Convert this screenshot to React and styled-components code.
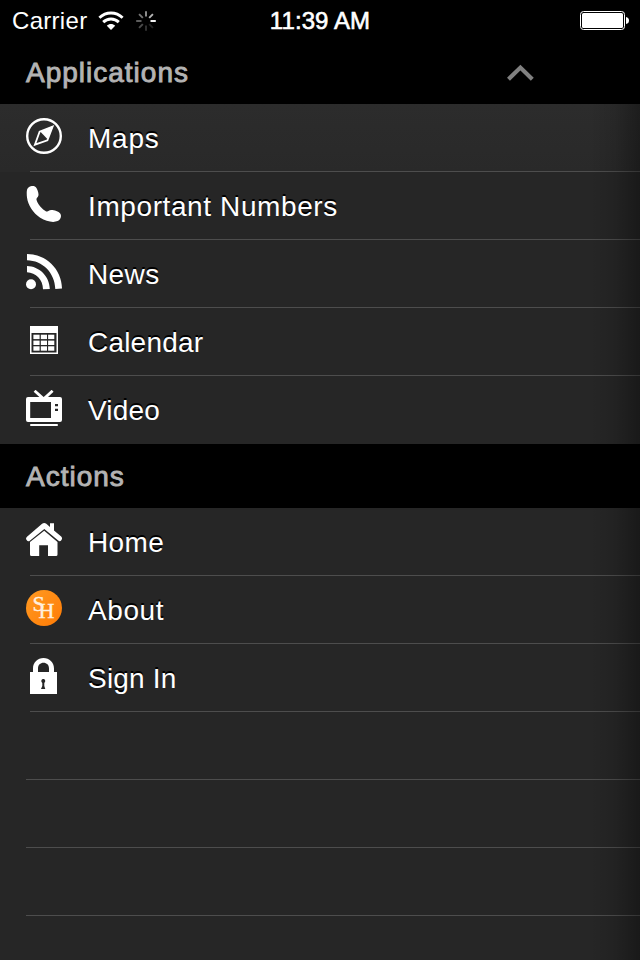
import styled, { createGlobalStyle } from 'styled-components';

const GlobalStyle = createGlobalStyle`
  body {
    margin: 0;
    background: #262626;
    font-family: 'Liberation Sans', Arial, sans-serif;
    overflow: hidden;
  }
`;

const Screen = styled.div`
  position: relative;
  width: 640px;
  height: 960px;
  overflow: hidden;
  background: #262626;
`;

const StatusBar = styled.header`
  display: grid;
  grid-template-columns: 1fr auto 1fr;
  align-items: center;
  height: 40px;
  padding: 0 11px;
  background: #000;
  color: #fff;
  font-size: 24px;
  line-height: 40px;
`;

const StatusLeft = styled.div`
  display: flex;
  align-items: center;
  svg {
    flex: none;
  }
`;

const Carrier = styled.span`
  box-sizing: border-box;
  width: 87px;
  padding: 1px 0 0 1px;
  letter-spacing: 0.3px;
`;

const Clock = styled.span`
  padding-top: 1px;
  letter-spacing: 0.1px;
  -webkit-text-stroke: 0.6px #fff;
`;

const StatusRight = styled.div`
  display: flex;
  justify-content: flex-end;
`;

const SectionHeader = styled.h2`
  display: flex;
  align-items: center;
  justify-content: space-between;
  box-sizing: border-box;
  height: 64px;
  margin: 0;
  padding: 2px 106px 0 26px;
  background: #000;
  color: #b3b3b3;
  font-size: 28px;
  font-weight: 400;
  letter-spacing: 1px;
  -webkit-text-stroke: 0.9px #b3b3b3;
`;

const List = styled.ul`
  margin: 0;
  padding: 0;
  list-style: none;
`;

const Row = styled.li`
  display: flex;
  align-items: center;
  box-sizing: border-box;
  height: 68px;
  padding: 0 0 4px 26px;
  background:
    linear-gradient(#4d4d4d, #4d4d4d) ${({ $inset }) => $inset || 30}px 67px / 100% 1px no-repeat,
    ${({ $lit }) => ($lit ? 'linear-gradient(#2c2c2c, #292929)' : '#262626')};
  &:last-child {
    ${({ $plainEnd }) => $plainEnd && 'background: #262626;'}
  }
`;

const Label = styled.span`
  margin-left: 26px;
  padding-top: 5px;
  color: #fff;
  font-size: 28px;
  line-height: 32px;
  letter-spacing: ${({ $spacing }) => $spacing}px;
  text-shadow: 0 -2px 0 #000;
`;

const EdgeShade = styled.div`
  position: absolute;
  top: 104px;
  right: 0;
  bottom: 0;
  width: 50px;
  background: linear-gradient(to right, rgba(0, 0, 0, 0), rgba(0, 0, 0, 0.1) 50%, rgba(0, 0, 0, 0.34));
`;

const Icon = ({ children }) => (
  <svg width="36" height="36" viewBox="0 0 36 36" fill="#fff">
    {children}
  </svg>
);

const CompassIcon = () => (
  <Icon>
    <circle cx="18" cy="18" r="16.8" fill="none" stroke="#fff" strokeWidth="2.4" />
    <path d="M26.6 8.6 13.6 13.6 8.9 26.7 21.4 22.3Z" fill="none" stroke="#fff" strokeWidth="1.8" />
    <path d="M27.5 7.7 14.2 13.6 21.6 21.2Z" />
  </Icon>
);

const PhoneIcon = () => (
  <Icon>
    <path d="M1.6 2.4C3.7-.2 8-1 9.9 1.2 11.5 3 12.9 7.4 12.4 9.6 12 11.5 10.2 12 10.5 13.8 11.2 17.8 16.6 23.8 20.2 25.4 22.2 26.2 22.7 24.2 25.2 24.1 28 24 32.6 25.6 34.2 27.4 36 29.8 34.6 33.8 31.6 35.1 27.3 37 20.1 35.5 14.2 31.8 7.1 27.2 2 19.4 1 11.6.6 8 .5 4 1.6 2.4Z" />
  </Icon>
);

const FeedIcon = () => (
  <Icon>
    <circle cx="5" cy="30.2" r="5" />
    <path d="M1 0C20 0 35.8 15 36 34.6L29.3 35C28.8 18.8 16.5 6.5 1 6.3ZM1 12C13.2 12.2 23.6 22.4 23.8 35L17 35.3C17 25.7 9.8 18.6 1 18.3Z" />
  </Icon>
);

const CalendarIcon = () => (
  <Icon>
    <path
      fillRule="evenodd"
      d="M4 4H32V32H4ZM5.5 11V30.5H30.5V11Z"
    />
    {[12.7, 18.6, 24.3].map((y) =>
      [7.4, 14.8, 22.1].map((x) => <rect key={`${x}-${y}`} x={x} y={y} width="6.2" height="4.4" />)
    )}
  </Icon>
);

const TvIcon = () => (
  <Icon>
    <path d="M8.6.8 17 8.4M26.6.8 18.4 8.4" fill="none" stroke="#fff" strokeWidth="2.8" />
    <path
      fillRule="evenodd"
      d="M2 7H34Q36 7 36 9V30Q36 32 34 32H2Q0 32 0 30V9Q0 7 2 7ZM4.2 12V28H25V12ZM29 14V16.2H32V14ZM29 18.8V21H32V18.8Z"
    />
    <rect x="4.2" y="34" width="27.6" height="2" rx=".5" />
  </Icon>
);

const HouseIcon = () => (
  <Icon>
    <path d="M4 20 18.2 8.8 31.5 20V32.5Q31.5 34 30 34H22V23.2H13.2V34H5.5Q4 34 4 32.5Z" />
    <path d="M18.2.9Q19.3.9 20.3 1.8L24 5V1.3H28V8.4L35.2 14.6Q36.7 16.1 35.5 18 34 20 32.2 18.6L18.3 7.1 3.8 18.8Q2 20.1.6 18.1-.7 16.2 1 14.7L16.1 1.8Q17.1.9 18.2.9Z" />
  </Icon>
);

const Monogram = styled.span`
  position: relative;
  width: 36px;
  height: 36px;
  border-radius: 50%;
  background: linear-gradient(135deg, #ff9a22, #ff7b05);
  color: #ffeedd;
  font-family: 'Liberation Serif', serif;
  font-size: 22px;
  line-height: 1;
`;

const Initial = styled.span`
  position: absolute;
  left: ${({ $x }) => $x}px;
  top: ${({ $y }) => $y}px;
  -webkit-text-stroke: 0.4px #ffeedd;
`;

const MonogramIcon = () => (
  <Monogram>
    <Initial $x={6.5} $y={3}>
      S
    </Initial>
    <Initial $x={12.5} $y={9.5}>
      H
    </Initial>
  </Monogram>
);

const LockIcon = () => (
  <Icon>
    <path
      fillRule="evenodd"
      d="M4 14H7V10.5C7 4.5 11.7 0 17.5 0S28 4.5 28 10.5V14H31V36H4ZM12 14H23V10.5C23 7 20.7 4.8 17.5 4.8S12 7 12 10.5ZM17.3 21C15.3 21 14.6 23.5 16.3 24.9V28L15 31H19.3L18.3 28V24.9C20 23.5 19.3 21 17.3 21Z"
    />
  </Icon>
);

const WifiIcon = () => (
  <svg width="26" height="20" viewBox="0 0 26 20" fill="none" stroke="#fff" strokeWidth="2.9">
    <path d="M1.4 6.7C8 .4 18 .4 24.6 6.7M5.2 11.1C9.6 6.9 16.4 6.9 20.8 11.1" />
    <path d="M8.8 14.7C11.2 12.5 14.8 12.5 17.2 14.7L13 19Z" fill="#fff" stroke="none" />
  </svg>
);

const SpinnerSvg = styled.svg`
  margin-left: 12px;
`;

const spokes = ['#929292', '#b5b5b5', '#ffffff', '#222222', '#333333', '#4c4c4c', '#636363', '#777777'];

const Spinner = () => (
  <SpinnerSvg width="20" height="20" viewBox="0 0 20 20">
    {spokes.map((color, i) => (
      <path key={color} d="M10 .2V5.5" stroke={color} strokeWidth="1.9" transform={`rotate(${i * 45} 10 10)`} />
    ))}
  </SpinnerSvg>
);

const BatteryIcon = () => (
  <svg width="49" height="19" viewBox="0 0 49 19">
    <rect x=".5" y=".5" width="44" height="18" rx="3" fill="none" stroke="#fff" />
    <rect x="2" y="2" width="41" height="15" rx="1.5" fill="#fff" />
    <path d="M46 6Q49 6.5 49 9.5T46 13Z" fill="#fff" />
  </svg>
);

const ChevronUp = () => (
  <svg width="28" height="18" viewBox="0 0 28 18" fill="none" stroke="#808080" strokeWidth="4.2">
    <path d="M2.5 15.2 14.4 3.6 26.3 15.2" />
  </svg>
);

const applications = [
  { label: 'Maps', icon: CompassIcon, spacing: 0.8, lit: true },
  { label: 'Important Numbers', icon: PhoneIcon, spacing: 0.6 },
  { label: 'News', icon: FeedIcon, spacing: 0.4 },
  { label: 'Calendar', icon: CalendarIcon, spacing: 0.2 },
  { label: 'Video', icon: TvIcon, spacing: 0.2 },
];

const actions = [
  { label: 'Home', icon: HouseIcon, spacing: 0.4 },
  { label: 'About', icon: MonogramIcon, spacing: 0.6 },
  { label: 'Sign In', icon: LockIcon, spacing: 0.2 },
];

const MenuRow = ({ item, plainEnd }) => {
  const ItemIcon = item.icon;
  return (
    <Row $lit={item.lit} $plainEnd={plainEnd}>
      <ItemIcon />
      <Label $spacing={item.spacing}>{item.label}</Label>
    </Row>
  );
};

const App = () => {
  return (
    <>
      <GlobalStyle />
      <Screen>
        <StatusBar>
          <StatusLeft>
            <Carrier>Carrier</Carrier>
            <WifiIcon />
            <Spinner />
          </StatusLeft>
          <Clock>11:39 AM</Clock>
          <StatusRight>
            <BatteryIcon />
          </StatusRight>
        </StatusBar>
        <SectionHeader>
          Applications
          <ChevronUp />
        </SectionHeader>
        <List>
          {applications.map((item) => (
            <MenuRow key={item.label} item={item} plainEnd />
          ))}
        </List>
        <SectionHeader>Actions</SectionHeader>
        <List>
          {actions.map((item) => (
            <MenuRow key={item.label} item={item} />
          ))}
          <Row $inset={26} />
          <Row $inset={26} />
          <Row $inset={26} />
        </List>
        <EdgeShade />
      </Screen>
    </>
  );
};

export default App;
